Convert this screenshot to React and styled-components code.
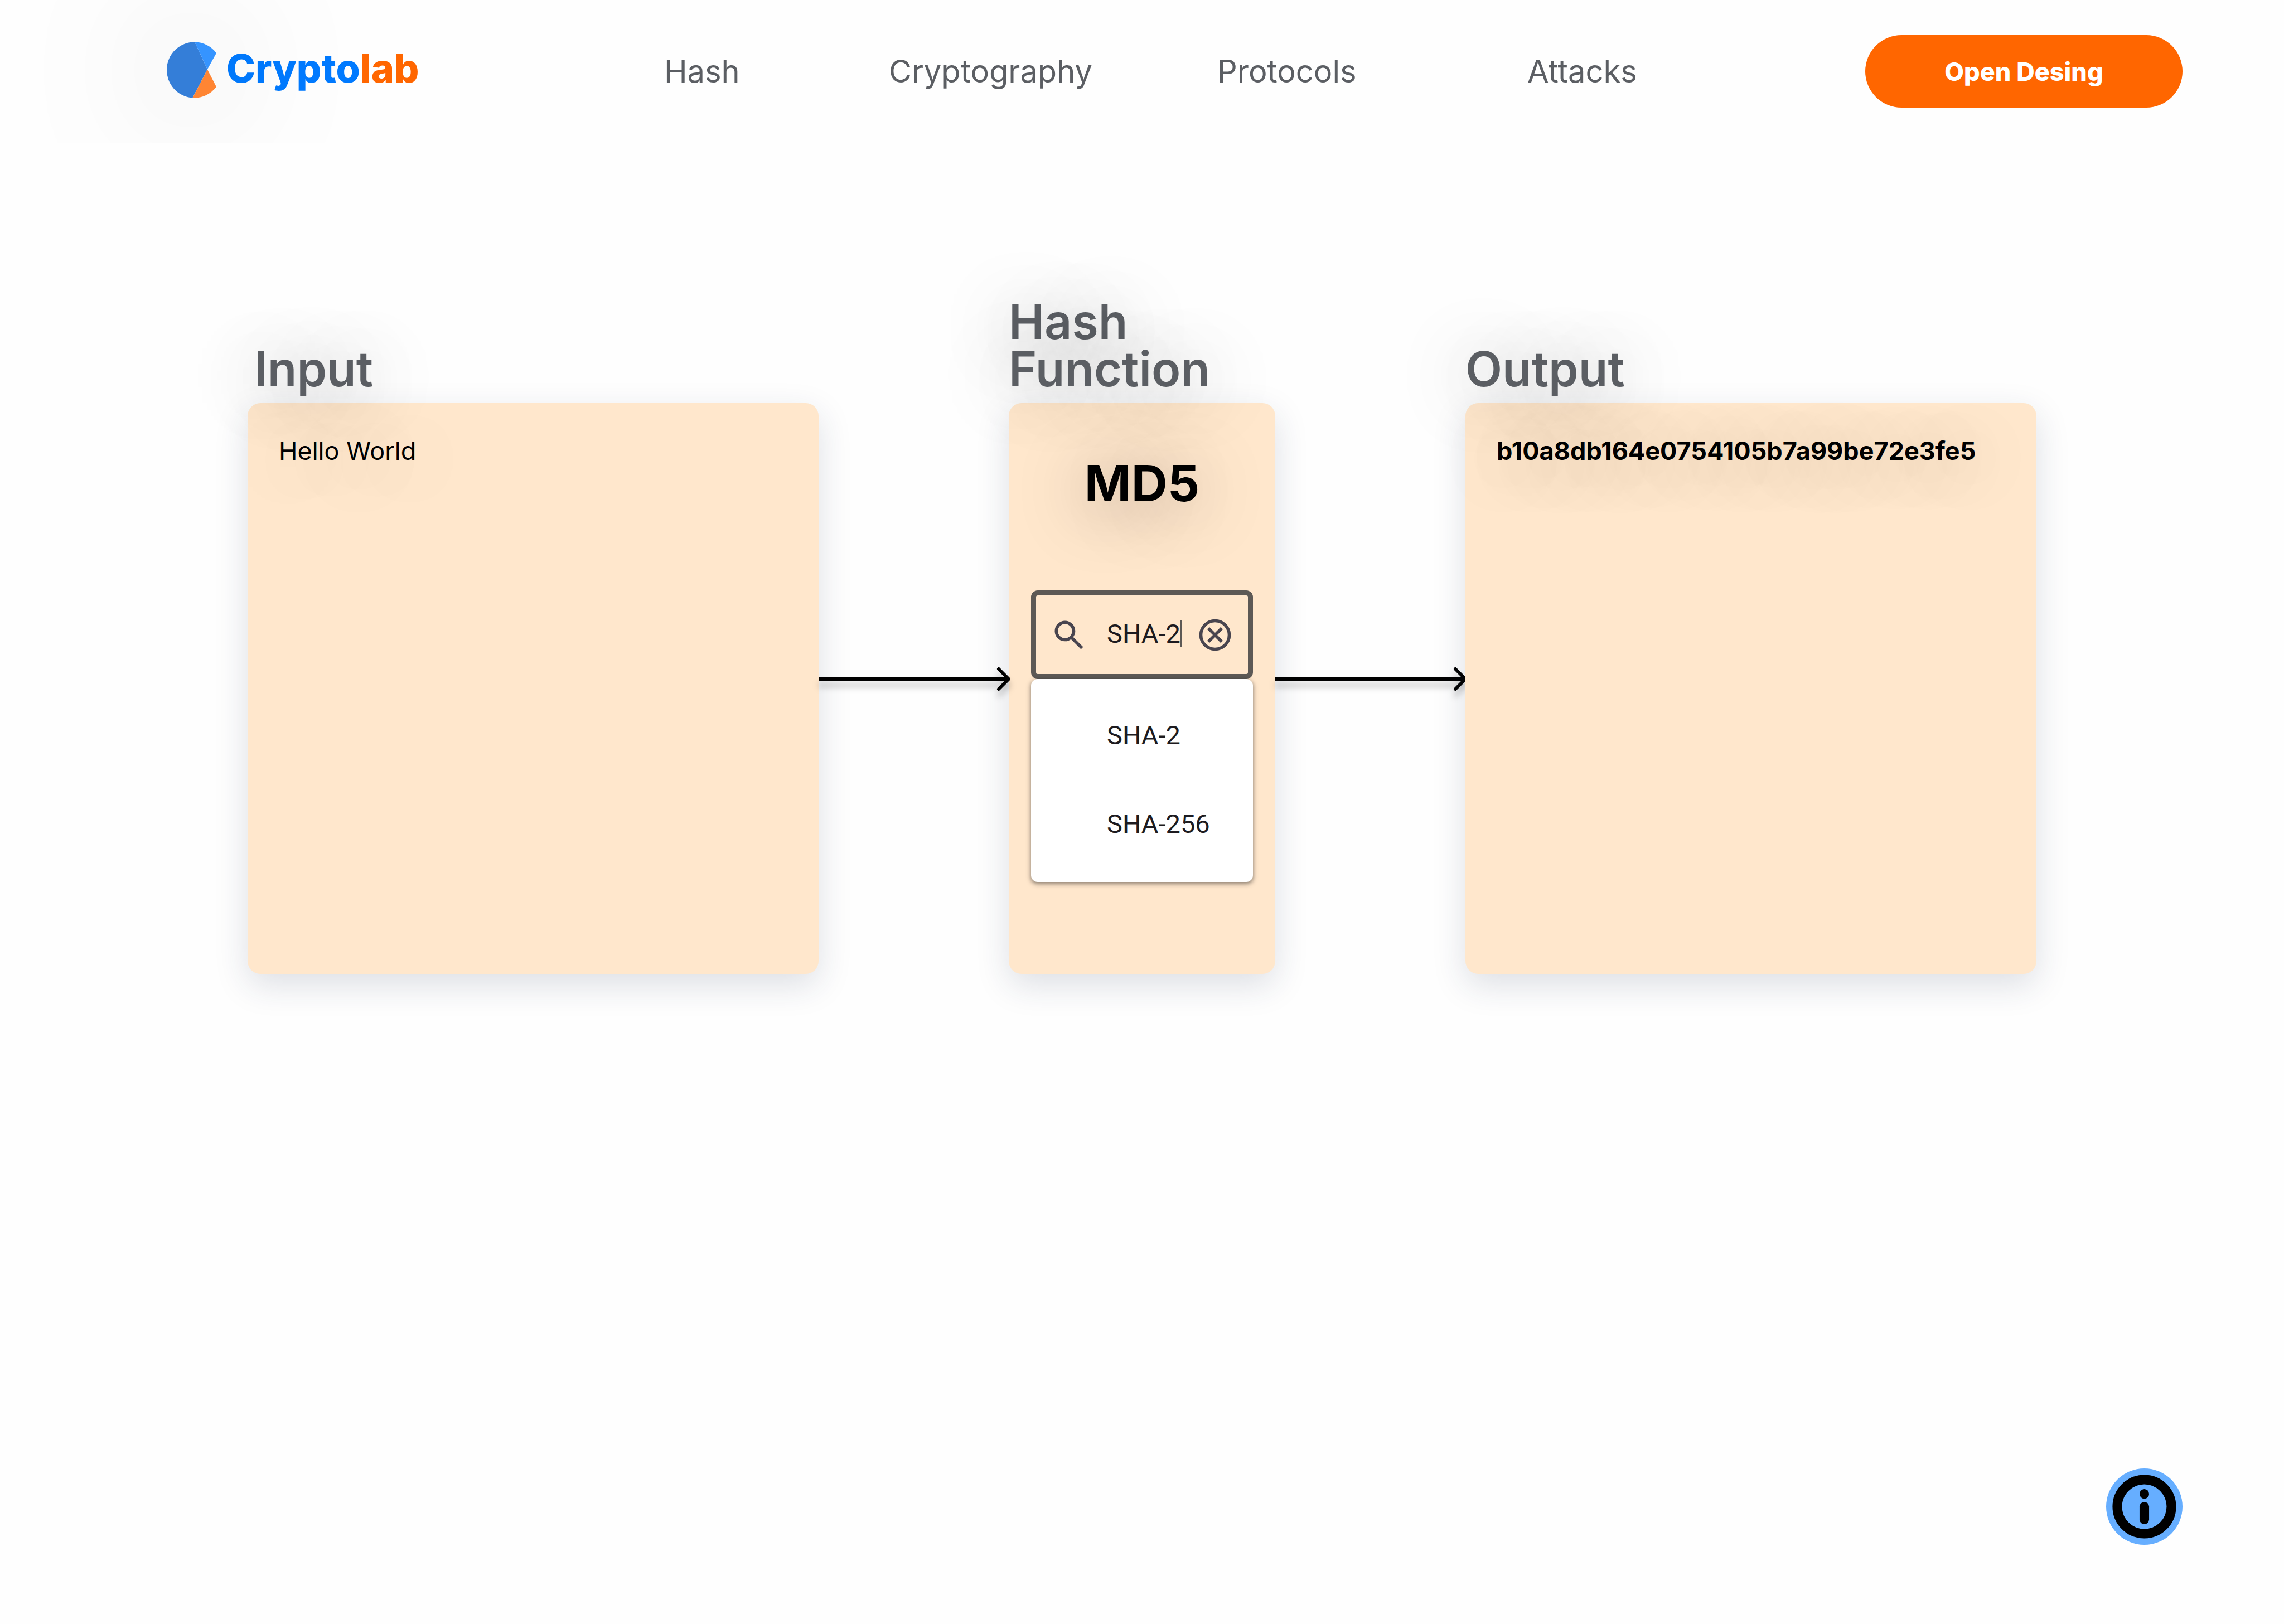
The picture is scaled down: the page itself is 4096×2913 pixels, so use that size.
import React, { useState } from "react";
import styled, { createGlobalStyle } from "styled-components";

const sans = `Inter, "Liberation Sans", sans-serif`;
const roboto = `Roboto, "Liberation Sans", sans-serif`;

const color = {
  page: "#fefefe",
  blue: "#007aff",
  orange: "#ff6600",
  slate: "#5b5e63",
  panel: "#ffe7cc",
  outline: "#5d5955",
  ink: "#1d1b20",
  icon: "#49454f",
  info: "#66aeff",
};

const glow = "0 12px 124px rgba(0, 0, 0, 0.42)";

const GlobalStyle = createGlobalStyle`
  *, *::before, *::after { box-sizing: border-box; }
  body { margin: 0; background: ${color.page}; font-family: ${sans}; }
  button, input, textarea { font: inherit; color: inherit; }
`;

const Page = styled.div`
  min-height: 100vh;
  display: flex;
  flex-direction: column;
`;

const Header = styled.header`
  display: grid;
  grid-template-columns: 892fr 2154fr 569px;
  align-items: center;
  height: 256px;
  padding: 0 182px 0 299px;
  overflow: hidden;
`;

const Brand = styled.a`
  display: flex;
  align-items: center;
  gap: 18px;
  padding-bottom: 6px;
  text-decoration: none;
`;

const LogoMark = styled.svg`
  width: 89px;
  height: 101px;
  overflow: visible;
  filter: drop-shadow(0 0 120px rgba(0, 0, 0, 0.25));
`;

const Wordmark = styled.span`
  padding-bottom: 5px;
  font-size: 70px;
  font-weight: 800;
  line-height: 84px;
  color: ${color.blue};
`;

const WordmarkAccent = styled.span`
  color: ${color.orange};
`;

const Nav = styled.nav`
  display: grid;
  grid-template-columns: 403fr 589fr 556fr 606fr;
`;

const NavLink = styled.a`
  justify-self: start;
  font-size: 56px;
  line-height: 68px;
  color: ${color.slate};
  text-decoration: none;
`;

const PrimaryButton = styled.button`
  height: 130px;
  border: 0;
  border-radius: 65px;
  background: ${color.orange};
  color: #fff;
  font-size: 45px;
  font-weight: 800;
  cursor: pointer;
`;

const Workflow = styled.main`
  flex: 1;
  display: grid;
  grid-template-columns: 1024fr 341fr 478fr 341fr 1024fr;
  align-items: end;
  align-content: start;
  padding: 279px 444px 0;
`;

const Stage = styled.section`
  display: flex;
  flex-direction: column;
  gap: 18px;
  min-width: 0;
`;

const StageTitle = styled.label`
  position: relative;
  z-index: 1;
  padding-left: ${(p) => (p.$inset ? "12px" : "0")};
  font-size: 86px;
  font-weight: 600;
  line-height: 85px;
  color: ${color.slate};
  text-shadow: ${glow};
  pointer-events: none;
`;

const panelBox = `
  position: relative;
  display: block;
  width: 100%;
  min-height: 1024px;
  border: 0;
  border-radius: 23px;
  background: ${color.panel};
  box-shadow: 0 20px 60px rgba(32, 48, 79, 0.15);
`;

const textPanel = `
  ${panelBox}
  padding: 59px 56px;
  font-size: 45px;
  line-height: 54px;
  color: #000;
  text-shadow: ${glow};
`;

const InputPanel = styled.textarea`
  ${textPanel}
  resize: none;
  outline: none;
`;

const OutputPanel = styled.output`
  ${textPanel}
  font-weight: 700;
`;

const FunctionPanel = styled.div`
  ${panelBox}
  padding: 90px 40px 40px;
`;

const Algorithm = styled.h2`
  margin: 0 0 138px;
  font-size: 90px;
  font-weight: 700;
  line-height: 108px;
  text-align: center;
  color: #000;
  text-shadow: ${glow};
`;

const SearchField = styled.div`
  display: flex;
  align-items: center;
  height: 159px;
  padding: 0 25px;
  border: 9px solid ${color.outline};
  border-radius: 12px;
  font-family: ${roboto};
  font-size: 47px;
  color: ${color.ink};
`;

const Icon = styled.svg`
  display: block;
  flex: none;
  width: 68px;
  height: 68px;
  fill: ${color.icon};
`;

const SearchText = styled.div`
  flex: 1;
  display: flex;
  align-items: center;
  min-width: 0;
  padding: 0 0 4px 34px;
`;

const SearchInput = styled.input`
  field-sizing: content;
  min-width: 0;
  padding: 0;
  border: 0;
  outline: none;
  background: transparent;
  caret-color: transparent;
`;

const Caret = styled.span`
  flex: none;
  width: 3px;
  height: 49px;
  background: ${color.outline};
`;

const ClearButton = styled.button`
  flex: none;
  padding: 0;
  border: 0;
  background: none;
  cursor: pointer;
`;

const Suggestions = styled.ul`
  margin: 0;
  padding: 23px 0;
  list-style: none;
  border-radius: 12px;
  background: #fff;
  box-shadow: 0 3px 6px rgba(0, 0, 0, 0.3), 0 3px 9px 3px rgba(0, 0, 0, 0.15);
`;

const Suggestion = styled.button`
  display: block;
  width: 100%;
  height: 159px;
  padding: 0 0 4px 136px;
  border: 0;
  background: none;
  font-family: ${roboto};
  font-size: 47px;
  text-align: left;
  color: ${color.ink};
  cursor: pointer;
`;

const Connector = styled.svg`
  position: relative;
  z-index: ${(p) => (p.$raised ? 1 : "auto")};
  display: block;
  width: 100%;
  height: 46px;
  margin-bottom: 506px;
  overflow: visible;
  fill: none;
  stroke: #000;
  stroke-width: 6;
  filter: drop-shadow(0 11px 6px rgba(0, 0, 0, 0.25));
`;

const Footer = styled.footer`
  display: flex;
  justify-content: flex-end;
  padding: 0 182px 142px;
`;

const InfoButton = styled.button`
  width: 137px;
  height: 137px;
  padding: 0;
  border: 0;
  border-radius: 50%;
  background: ${color.info};
  cursor: pointer;
`;

const InfoIcon = styled.svg`
  display: block;
  width: 100%;
  height: 100%;
`;

const links = ["Hash", "Cryptography", "Protocols", "Attacks"];
const algorithms = ["SHA-2", "SHA-256"];

function Logo() {
  return (
    <LogoMark viewBox="0 0 94 106" aria-hidden="true">
      <path fill="#347ed8" d="M53 0A53 53 0 0 0 49 105.85L77 52Z" />
      <path fill="#3594ff" d="M53 0A53 53 0 0 1 94 21L77 52Z" />
      <path fill="#ff8533" d="M49 105.85A53 53 0 0 0 94 85L77 52Z" />
    </LogoMark>
  );
}

function Arrow({ raised }) {
  return (
    <Connector $raised={raised} aria-hidden="true">
      <line x1="0" y1="23" x2="100%" y2="23" />
      <svg x="100%" y="23" overflow="visible">
        <path d="M-18 -18L0 0L-18 18" strokeLinecap="round" strokeLinejoin="round" />
      </svg>
    </Connector>
  );
}

export default function App() {
  const [text, setText] = useState("Hello World");
  const [query, setQuery] = useState("SHA-2");

  return (
    <>
      <GlobalStyle />
      <Page>
        <Header>
          <Brand href="#home">
            <Logo />
            <Wordmark>
              Crypto<WordmarkAccent>lab</WordmarkAccent>
            </Wordmark>
          </Brand>
          <Nav>
            {links.map((name) => (
              <NavLink key={name} href={`#${name.toLowerCase()}`}>
                {name}
              </NavLink>
            ))}
          </Nav>
          <PrimaryButton type="button">Open Desing</PrimaryButton>
        </Header>

        <Workflow>
          <Stage>
            <StageTitle htmlFor="message" $inset>
              Input
            </StageTitle>
            <InputPanel
              id="message"
              spellCheck={false}
              value={text}
              onChange={(e) => setText(e.target.value)}
            />
          </Stage>

          <Arrow raised />

          <Stage>
            <StageTitle htmlFor="algorithm">Hash Function</StageTitle>
            <FunctionPanel>
              <Algorithm>MD5</Algorithm>
              <SearchField>
                <Icon viewBox="0 0 24 24" aria-hidden="true">
                  <path d="M19.6 21l-6.3-6.3A6.1 6.1 0 0 1 9.5 16C5.9 16 3 13.1 3 9.5S5.9 3 9.5 3 16 5.9 16 9.5c0 1.4-.5 2.7-1.3 3.8l6.3 6.3zM9.5 14c2.5 0 4.5-2 4.5-4.5S12 5 9.5 5 5 7 5 9.5 7 14 9.5 14z" />
                </Icon>
                <SearchText>
                  <SearchInput
                    id="algorithm"
                    type="text"
                    spellCheck={false}
                    value={query}
                    onChange={(e) => setQuery(e.target.value)}
                  />
                  <Caret />
                </SearchText>
                <ClearButton type="button" aria-label="Clear" onClick={() => setQuery("")}>
                  <Icon viewBox="0 0 24 24" aria-hidden="true">
                    <circle cx="12" cy="12" r="9" fill="none" stroke={color.icon} strokeWidth="2" />
                    <path d="M8.4 17l3.6-3.6 3.6 3.6 1.4-1.4-3.6-3.6L17 8.4 15.6 7 12 10.6 8.4 7 7 8.4l3.6 3.6L7 15.6z" />
                  </Icon>
                </ClearButton>
              </SearchField>
              <Suggestions>
                {algorithms.map((name) => (
                  <li key={name}>
                    <Suggestion type="button" onClick={() => setQuery(name)}>
                      {name}
                    </Suggestion>
                  </li>
                ))}
              </Suggestions>
            </FunctionPanel>
          </Stage>

          <Arrow />

          <Stage>
            <StageTitle htmlFor="digest">Output</StageTitle>
            <OutputPanel id="digest">b10a8db164e0754105b7a99be72e3fe5</OutputPanel>
          </Stage>
        </Workflow>

        <Footer>
          <InfoButton type="button" aria-label="Information">
            <InfoIcon viewBox="0 0 48 48" aria-hidden="true">
              <circle cx="24" cy="24" r="17" fill="none" stroke="#000" strokeWidth="6" />
              <circle cx="24" cy="16" r="3" />
              <rect x="21" y="21" width="6" height="14" rx="3" />
            </InfoIcon>
          </InfoButton>
        </Footer>
      </Page>
    </>
  );
}
